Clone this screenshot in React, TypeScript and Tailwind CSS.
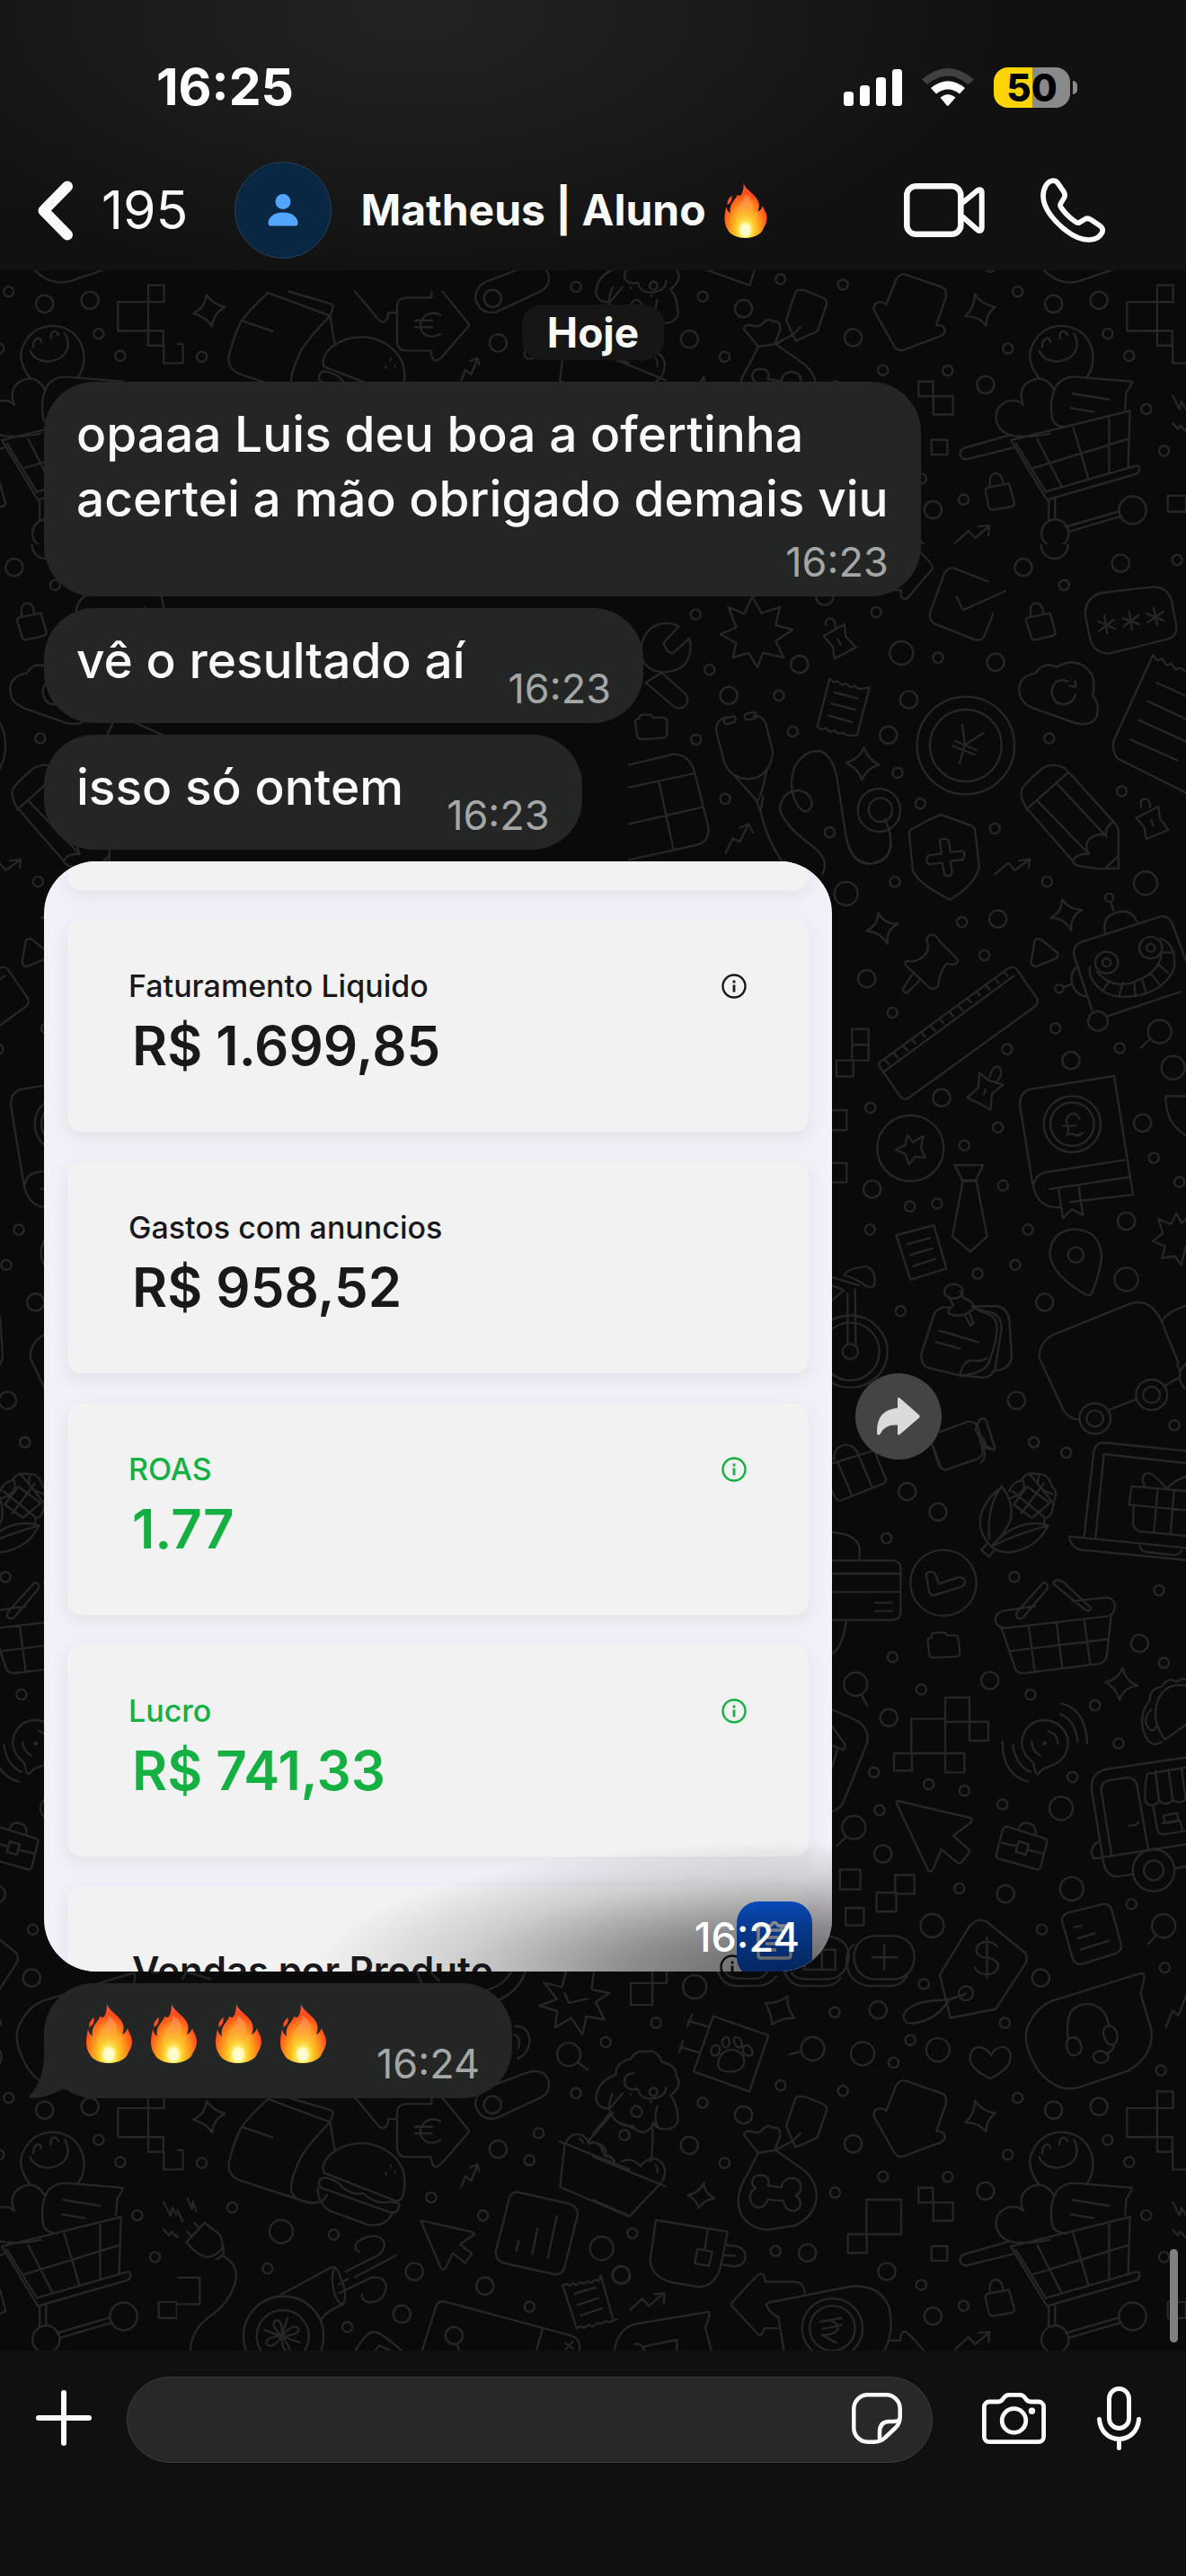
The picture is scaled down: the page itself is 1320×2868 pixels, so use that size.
import type { ReactNode } from "react";

type Point = [number, number];
type Oval = [number, number, number, number];

type Region = {
  x: number;
  y: number;
  sx: number;
  sy: number;
  small: Point[];
  medium: Point[];
  large: Point[];
  ovals: Oval[];
  path: string;
};

// Wallpaper doodles, one entry per part of the tile
const regions: Region[] = [
  {
    x: 0,
    y: 2330,
    sx: 2.24,
    sy: 2.914,
    small: [[503, 228], [579, 372], [832, 460], [667, 570], [1075, 340], [1204, 398], [1343, 131], [1320, 219], [1320, 694], [866, 760]],
    medium: [[1242, 183], [1033, 580], [1209, 627], [1002, 718], [1132, 788], [1548, 590]],
    large: [[701, 450], [1500, 505]],
    ovals: [[707, 790, 100, 130], [705, 790, 65, 85]],
    path:
      "M515 27q15 30 46 40-30 20-32 62-15-30-47-42 30-20 33-60z" +
      "M485 422l12 18M466 450l10 14M465 485l45-63 38 38q10 25 5 45-10 25-38 28-22-5-50-48zM555 495q10 30-15 45M556 530q45 30 28 95-15 60-60 100-45 40-50 110" +
      "M410 352l22 50 5-35 18 50M467 342l12 35 2-25 8 32M408 443l18 22 3-18 15 20" +
      "M432 600h66v86h-66zM398 685h36v45h-36zM408 186h48v62h-48z" +
      "M668 20q-50 60-70 100-20 60-28 110-2 40 30 55l170 72q35 5 45-25M668 20l155 75 8-30q-2-8-15-12L720 16M823 95q-60 80-75 120-25 70-22 100 5 35 45 40M823 95l12 95M605 112l75 33" +
      "M808 260q-10-30 20-65 40-38 90-30 60 15 85 80 12 45 0 95-5 12-18 10zM795 290q5-20 25-12 25 10 35 30 25 25 50 18 25 30 50 30 30-5 40 5 0 30-20 28L800 308q-6-8-5-18zM792 308q0 50 30 75l95 45q45 10 62-40M962 260v4M974 235v4M985 256v4" +
      "M1010 36h66V16M990 85h-22q0 25-12 30-10 0-20-20L885 16M990 85V60q2-22 22-24M990 85v95q2 28 22 28h62q2 30 12 32 8 0 20-18l60-90q5-8 0-15L1103 16M1098 92q-20-12-35 0-15 15-15 35t15 32q20 8 35-5M1035 110h42M1035 132h42" +
      "M1150 305l10-35 15 15 15-50M1172 242l18-10 5 22" +
      "M1290 322l128 38q25 10 22 38l-32 165q-5 30-30 25l-120-35q-25-10-22-38l32-165q5-30 22-28zM1388 400l-22 135M1340 440l-13 83M1293 482l-6 30" +
      "M1052 415l120 35q15 5 8 12l-33 30 30 30-18 30-30-32-18 48q-6 10-12 0L1050 418z" +
      "M1403 625l10-5 6 6 10-8 8 6 10-10 8 6 10-8 8 5 12-10 8 4 5-18 30 140M1403 625l35 140 10-8 8 6 12-10 10 5 12-12 10 4 10-10 8 5 20-10M1432 652l52-20M1440 688l52-22M1448 722l52-22" +
      "M700 655l125-88q15-8 25 35 18 60 5 85-40 18-55 50M835 565q-10 20-4 70 8 50 25 50M862 580l80-52q20-20 15-45-10-25-42-15-35 15-28 40l8 8M885 598l102-70M845 650l80-50q35-8 38 30-5 50-45 50-18-8-15-25M845 622l22-18" +
      "M702 790q-30-40-15-52 20 0 15 52 30-45 42-25 5 20-42 25-40 0-38 25 15 20 38-25 0 50 20 50 5-10-20-50l15-60M702 790l45 20M702 790l-42-20" +
      "M1052 838l35-145q5-18 20-16l315 110q28 10 22 50M1352 768l-15 70M1140 820l5 18M1410 812l18 16M1428 808l-18 24M885 838q30-65 48-62 15 0 70 62M935 838l10-18 30 18" +
      "M1395 158l173 90M1408 168l-12 138 172 95M1410 165q10-35 35-30 18 5 22 30 30-15 40 40 25 5 25 22M1445 150q8 3 8 12M1468 155l60-90",
  },
  {
    x: 0,
    y: 2060,
    sx: 2.24,
    sy: 3,
    small: [[1510, 641], [1436, 811]],
    medium: [[1228, 850]],
    large: [[1418, 682]],
    ovals: [],
    path:
      "M1480 410l-5 55 45 12-35 30 22 58-45-10-10 60-28-55-40 32 5-55-45-18 45-22-33-55 45 15 10-50M1408 478l10 32 45-14" +
      "M1285 588q35 0 35 52-5 45-30 55M1282 615q18 10 10 45M1440 708l25 25" +
      "M1185 850q0-40 30-58l100-50q40-15 52 25 8 40-20 60l-110 68q-40 10-52-45z" +
      "M1040 405q15 75 50 75M1310 405q-20 80-95 110M1075 405q5 15 20 30M1275 405q-20 50-70 65M455 430l10-25 60 25",
  },
  {
    x: 660,
    y: 2060,
    sx: 2.376,
    sy: 2.8,
    small: [
      [969, 119], [1424, 168], [1187, 247], [1512, 366], [875, 417], [639, 505], [1089, 538], [839, 592], [795, 662], [167, 538],
      [496, 733], [661, 750], [1123, 772], [1502, 686], [1361, 903], [1097, 949], [1418, 972], [348, 975], [767, 1017],
      [938, 1018], [640, 1067], [1463, 1138], [483, 1249], [104, 1194], [868, 1355], [980, 1420], [1510, 1268], [83, 888], [290, 787],
    ],
    medium: [
      [1091, 136], [1184, 398], [754, 498], [398, 825], [255, 920], [688, 915], [1218, 810], [1338, 799], [1038, 1062], [567, 1255],
      [777, 1313], [75, 1325], [899, 1452],
    ],
    large: [[1266, 120], [897, 235], [269, 426], [912, 622], [713, 634], [1509, 236], [581, 619]],
    ovals: [[633, 1490, 80, 93], [633, 1490, 60, 70], [1427, 1453, 36, 43], [1222, 1525, 36, 43], [986, 446, 19, 22]],
    path:
      "M1490 265l-22 27M550 627l-30 10M653 60h54v62h-54zM799 77h51v59h-51zM750 132h52v59h-52zM668 180h48v54h-48zM100 414h57v68h-57zM157 378v36h38v-36" +
      "M740 267h60q48 10 50 65-2 60-50 70h-60q-48-10-50-70 2-55 50-65zM690 295q-20 15-20 55 5 60 55 73h60q30 0 45-30M770 295v77M738 334h66M625 268q50 10 52 62-5 62-52 72h-60q-30 0-40-20M505 378q15 40 45 45h60q30 0 45-25M605 310h-46v62h82v-62h-36v62M330 378q15 45 50 45h55q30 0 50-30M350 380q10 20 40 20h40q20 0 30-20" +
      "M1020 218q-15 5-25 20l-78 150 28 135 120-28 80-145q5-15-2-30L1040 222q-10-5-20-4zM1042 272v127M1068 300q-8-15-28-15-26 3-26 28 2 20 28 22 30 5 30 28-4 22-32 24-24-2-30-22M985 447q-30 20-90 22-60 8-74 45 0 30 30 25 55-10 90-70" +
      "M1255 195l90-26q20-5 27 18l24 105q5 20-15 30l-85 32q-20 5-27-15l-28-115q-3-20 14-29zM1273 240l18-5M1282 275l44-16M1290 310l75-28" +
      "M1456 385q5 10-8 62l28 110q10 80-60 130l-130 52q-60 20-110-55-50-95-20-150 20-45 55-63l230-85q12-4 15-1zM1272 583q-20 0-20 25 5 32 20 32 20-5 20-25-5-30-20-32zM1256 585q-5-60 10-85 20-25 50-20 40 10 48 65M1367 547q-20 0-17 28 8 32 22 32 15-5 15-28-5-30-20-32zM1378 605q0 20-22 30M1340 625q-18 5-17 20 5 18 20 18 20-3 20-20-3-15-23-18z" +
      "M515 455q-5 35 17 68-30-2-58 20-2-30-18-68 30 5 59-20zM1010 780q15 30 54 40-25 20-24 58-20-30-56-30 24-20 26-68zM293 1037q0 30 28 48-28 5-42 30-5-25-28-40 28-5 42-38z" +
      "M318 517l146 60-50 175-148-62zM302 549l-50-17M262 512l-12 36M278 630l-48-17M238 593l-10 36M365 622c-18 0-32 18-34 40-2 30 22 28 38 28 22-2 34-20 30-38-2-18-16-30-34-30zM325 607c-8 0-14 12-13 22 2 16 18 14 22 0 3-12 0-22-9-22zM353 582c-10 2-14 16-10 26 6 12 18 6 18-8 0-10-2-18-8-18zM378 582c-8 2-6 14-2 24 6 14 20 10 18-4-2-10-8-20-16-20zM405 608c-10 4-12 16-5 26 8 12 22 8 22-4 0-10-8-24-17-22z" +
      "M60 700q0-40 40-50 15-30 40-22 30-10 42 32 40 10 38 42 20 30-15 62 20 30 20 80-10 30-40 25-20-2-25-20-5 25-30 30-20-5-25-20-40 5-58-40-10-20 5-60M60 700q-50 20-52 75 5 35 38 28l32-45M108 695q-25 0-25 28 5 30 35 20 5 30 35 32 40-5 40-35M150 750q10-20 20 0 0 18-12 16-10-4-8-16M170 798q-10 40 0 60M100 812q15-30 30 0 0 20-15 20-14-4-15-20M158 870q0 60-5 100M45 820L0 885M75 850l55 30M100 760v2M154 784v2" +
      "M0 955l190 92M0 1090l97 50 85-105M75 970q30-15 50 15 20-30 45-22 30 20 15 65M0 910q35 5 35 40 20 5 20 25M165 980q8 10 5 25" +
      "M1053 640q10-30 35-26 20 8 15 40-5 30-53 58-48-28-53-58 0-35 20-40 25 0 36 26z" +
      "M545 767q-10 2-12 15l-22 78 25 66 57-30 25-85q2-12-10-20l-50-24zM548 882L530 905 483 935M437 943l-38-55q2-15 20-12 20 10 30-5 15-20 28-5 20-5 18 25l-15 45zM437 943q-20 50-42 95-20 55-2 100 25 45 70 45l70-13q50-25 58-85 2-50-30-85l-78-65M462 1045c8-20-4-34-22-32-20 2-26 28-10 40-14 8-20 30-10 48 16 24 36 10 42-12l42 4c2 20 14 36 32 30 18-10 16-36 0-46 16-10 20-36 4-50-20-12-40 0-42 24z" +
      "M825 718q-20-3-28 30l-22 65q-5-10-20-8-15 5-12 25l55 115q10 15 25 8l95-42q15-8 12-20 0-15-22-15l25-85q5-30-15-35z" +
      "M1492 752v188h41v55h35M1492 752h42v52h-122v90h120v46M723 1089h92v108h-92zM674 1197h50v58h-50zM861 1052h38v46h-38zM900 1098h52v57h-52zM895 1234h42v46h-42z" +
      "M166 1153l190 36-15 90q-12 80-60 82l-65-12q-60-15-65-70zM303 1187l-7 57M276 1243l39 8-8 45-38-8zM352 1230l30 5q25 10 20 40-5 22-30 22l-28-5M347 1262l28 2" +
      "M98 1433l32-35 18 22 38-38M163 1384l26-3-2 32M958 1555l35-37 18 22 38-38M1020 1504l28-3-2 32" +
      "M458 1415q5 25 32 40l15 105M458 1415q10-8 30-10l190-45q80-10 105 65 15 80-15 140M560 1385q0-40-30-40h-75q0-25-12-25-8 0-75 90-5 8 5 18l65 82q10 5 15-20h35M602 1470l55-12M607 1492l50-12M628 1466q25 10 18 30-10 15-40 15l38 25M788 1528h25q0-28 12-28 8 2 50 60" +
      "M55 1568q10-80 60-92l190-37q8 0-8 50l18 80M110 1540q20-8 30 28l-10-20 92-22v42" +
      "M1045 1382l55-12 14 60q2 10-8 12l-48 10q-10 0-12-12l-8-45q-2-10 7-13zM1050 1380q-4-38 14-42 20 2 20 35" +
      "M1180 1042q-40-60-15-110 25-55 80-53 60 8 75 75 8 45-12 82M1180 957q10 30 45 33 50-5 55-50 0-20-8-38M1188 945q0-25 12-28 8 0 10 12M1234 918q0-25 12-22 8 4 8 12M1138 1125q-20-60 30-80 30-10 50 30M1138 1125q-15-20-45-10-35 20-25 65 10 35 45 42 50 5 95-8M1215 1170q-10-60 10-105 15-25 45-28l155 15q3 2-15 35l-3 50M1215 1170q5 20 35 25M1268 1090l96 18M1264 1135l60 12" +
      "M1105 1235l315-92-5 180M1105 1235l95 185M1118 1245l80 152M1200 1395l235-80q12-2 10 12-2 12-10 14l-235 80M1175 1232l65 150M1270 1195l40 160M1365 1165v170M1165 1322l248-90M1100 1220l-120 40q-12 8-8 22 5 15 18 12l120-35M1205 1420v62M1222 1415v65M1250 1505l140-48M1258 1520l140-48" +
      "M1533 1097l18 42 5-25 12 24M1533 1183l14 18 6-12 15 18M1520 1408h48v50h-48zM1515 550l18-50 15 15 20-60",
  },
  {
    x: 860,
    y: 1600,
    sx: 3,
    sy: 3,
    small: [
      [872, 18], [980, 52], [380, 338], [807, 467], [1290, 512], [400, 735], [496, 843], [861, 860], [1076, 896], [1306, 754],
      [1155, 1023], [338, 1120], [1001, 1135], [521, 1160], [640, 1181], [767, 1227], [357, 1246],
    ],
    medium: [[449, 182], [552, 250], [725, 813], [1225, 689], [388, 937], [368, 1392]],
    large: [[963, 1240], [277, 825], [271, 1304]],
    ovals: [[570, 487, 110, 110], [1272, 1447, 70, 70], [1272, 1447, 33, 33], [908, 1023, 4, 4]],
    path:
      "M296 860l20 38M245 1335l-30 30M530 20l25 75q10 18 30 12l100-35q20-10 15-30L690 0M700 0l15 30 25 14q5-8-12-44" +
      "M198 88l145-45M343 55l35 85q2 10-8 15l-145 58q-15 0-27-35M215 80l50 115M280 45l52 122M205 75q-2-45 40-50 25 2 32 20" +
      "M765 165q40 50 30 110-20 50-65 90-60-60-25-130 20-40 60-70zM765 165q-50 60-42 175M730 365q90-100 190-70-40 80-130 90-40 0-60-20zM730 365q80-40 190-70M715 357l-18 20 25 22 20-25M790 180q10-30 40-35 15-30 50-22 40-5 52 42 25 20 5 52 0 50-30 55v25M835 145q20 40-45 60M860 125l80 100M850 165l-45 60 60 45 60-50-75-55M800 180l110 90M905 155l-75 100M890 130q-20 40 45 60" +
      "M513 465q-5-10 12-15 15-2 20 12l10 28 65-22q20-2 22 15 0 12-12 17l-90 28q-10 2-17-10z" +
      "M198 412h205q24 4 24 24v150q0 22-24 25H198M198 456h229M198 517h229M342 553h55M342 581h55M198 318q80 5 92 50v42M245 615q-12 90-47 108" +
      "M530 670q-15 0-12 15l5 40q3 12 15 12l75-4q12-2 12-14l-5-45q-2-12-14-12h-25q0-10-12-10l-30 2q-10 2-9 14z" +
      "M770 580l105-15M1000 548l115-12q25 3 28 28-2 30-25 34l-340 40q-30 0-35-28 2-25 28-30M1130 598l-15 135q-5 20-25 24l-255 32q-18 0-25-15L765 640M790 715l328-40M855 630l20 155M948 620l18 145M1040 610l20 145M905 485l-90 100q-5 15 5 20 10 3 18-5l78-92q8-18-11-23M955 478q-15-2-18 12l108 88q15 5 17-8l-90-85z" +
      "M1168 770q10 45 50 60-45 5-60 48-10-40-48-60 40-5 58-48z" +
      "M576 870h81v81h-81zM463 941h113v115h-113zM657 951h63v63h-63zM405 1056h60v58h-60zM576 1056h64v64h-64zM576 941v115" +
      "M870 1088q-50-40-35-90 20-50 70-53 60 2 80 60 8 70-60 95l-22 8-18 18q-8 0-15-38zM865 1018q0 30 28 45M920 982q32 10 32 42M960 925q50 20 58 92M965 890q80 20 85 133M802 1028q10 70 58 90M767 1018q0 110 85 133" +
      "M418 1215q-5 0-4 10l105 222q8 8 16-2l28-68 55 45q8 5 14-4l25-32q2-6-4-10l-50-45 60-45q6-8-2-14z" +
      "M775 1303q5-5 15 0l120 38q8 3 6 12l-22 85q-3 8-15 5l-125-35q-10-3-8-12l22-85zM820 1310q10-28 35-20 28 8 22 38M765 1355l45 10M850 1378l50 12M822 1350l33 10-10 35-33-10z" +
      "M1040 330l32-280q5-30 30-32l278 28M1078 335l28-278 274 30M990 332l390 38M990 332q5 35 35 44l355 35M1225 362q5 20 25 22l90 10q20-2 25-15M1380 180l-182-16-8 62 190 18M1285 178l-12 140M1340 182l-12 140M1205 232l-2 55q2 20 22 28l155 15M1315 172q-50-60-70-50-20 15 0 45M1315 172q30-30 65-40" +
      "M1380 830q-80-15-100 70-10 60 30 110l70-50M1300 1018q-40 25-60-30-20-60 20-110-5-35 40-45 20-35 50-15 15-15 30-8M1265 910q-25 20-18 50 20 35 35 5" +
      "M1380 1070l-260 38q-60 10-55 70l40 245q10 45 45 45l55-8M1132 1400l-35-220q0-30 25-33l60-10q30 0 35 30l38 215M1070 1408l310-48M1250 1125q-10 50-5 95 20 20 42 0l5-5q20 20 45-2 20 15 42-2M1250 1125l130-22M1278 1115l12 100M1322 1110l14 105M1365 1105l13 100M1270 1230l15 85q8 12 20 12l75-12M1190 1298l20-2 12-10M1305 1265l45-10 5 25-45 8zM1300 1290l60-8 8 30M1345 1440l35-6M1090 1350q-35 20-22 50 5 8 30 6" +
      "M198 910l80 35q45 25 38 75l-80 200q-15 25-38 30M198 965l42 60q5 10-5 20l-37-15M215 1045l-17 60",
  },
  {
    x: 900,
    y: 940,
    sx: 3,
    sy: 2.24,
    small: [
      [288, 94], [796, 93], [512, 194], [587, 277], [280, 420], [824, 459], [663, 511], [1039, 508], [206, 657], [632, 706],
      [520, 751], [1153, 782], [649, 851], [338, 903], [429, 896], [1238, 842], [205, 961], [732, 961], [690, 1049], [564, 1071],
      [307, 1164], [1221, 1449], [752, 1491],
    ],
    medium: [[632, 186], [194, 335], [876, 539], [444, 632], [1115, 695], [212, 860], [1061, 940], [788, 1142], [694, 1387]],
    large: [[125, 123], [1125, 97], [1217, 557], [1061, 1085], [1172, 467]],
    ovals: [
      [995, 295, 38, 27], [995, 295, 14, 10], [1142, 258, 38, 27], [1142, 258, 14, 10], [966, 441, 33, 24], [1004, 133, 14, 10],
      [837, 360, 14, 10], [340, 758, 111, 82], [880, 698, 95, 70], [880, 698, 73, 54], [892, 1024, 26, 19], [484, 1115, 31, 18],
      [956, 1432, 52, 38], [956, 1432, 28, 20], [1145, 1373, 52, 38], [1145, 1373, 28, 20], [139, 1265, 124, 90], [139, 1265, 97, 72],
      [139, 1265, 26, 19],
    ],
    path:
      "M1140 485l-30 22M232 170q20 30 66 28-40 15-35 50-25-30-70-32 40-15 39-46zM846 137q20 25 66 27-40 15-35 52-25-35-70-32 40-15 39-47z" +
      "M400 228q25-8 35 12l60 45q8 12-10 15l-25-2q-20 15-28 55-12 12-28 5l-78-55q-8-8 2-12 35 5 60-15 15-15 10-28-8-12 2-20zM345 325l-30 35q0 12 15 10l40-30" +
      "M755 240q10-8 25 0l50 30q8 8-5 15l-60 18q-20 5-22-10z" +
      "M905 245l270-65q30-3 40 20l45 90M905 245q-25 10-18 35l60 135M990 222q-10-40 30-50 55-15 75 20M1018 165l-10-22M1000 428l240-60M880 348l-28 8M900 305q-25 10-22 35 8 35 50 40M940 305q-10 30 40 60 50 25 130 10 80-15 110-65 10-60-45-75M1000 345l-18 20M1050 345l-12 30M1087 345l5 35M1115 340l12 32M1140 320l30 28M1165 298l35 22M1175 270h45M962 318q60 50 140 20 70-20 78-70" +
      "M235 545l430-235q15-8 28 0l70 75q5 10-5 18L335 632q-15 8-28-2l-70-75q-4-6-2-10zM250 568l435-240M255 538l12 10M285 521l14 12M316 503l14 12M346 487l12 10M377 470l12 10M408 453l14 12M438 436l12 10M470 418l12 10M500 402l14 12M530 384l12 10M560 367l12 10M590 350l14 12M622 335l12 10M652 318l12 10" +
      "M145 461h55v78h-55zM145 500h55M93 539h56v40h-56zM70 663h57v50h-57zM70 795h57v48h-57z" +
      "M570 570l30 18 50 12-38 22-5 40-35-15-43-15 38-25zM605 580q10-30 30-25 20 15-10 40M590 612l-6 12" +
      "M330 725l18 18 35-15-8 30 14 24-32-4-22 20-12-25-33-12 32-10z" +
      "M488 800h95l-25 38h-45zM515 840l-35 138 60 38 56-38-36-138z" +
      "M705 650q0-35 40-40l275-32 63 296-210 18M705 650l45 205q20 55 90 50M750 855q5-35 50-38l255-30M805 860l265-30M835 862l14 70 30-22 37 15-14-70M905 685q-15-20-35-10-15 10-5 30 5 15-2 20l18-3q15 8 34-2M850 702h42" +
      "M892 960q-80 2-87 60 5 55 125 105 12 2 18-10 30-60 30-90-5-60-86-65z" +
      "M293 975l125-25 42 108-120 28zM330 997l75-15M340 1024l72-16M350 1052l74-18" +
      "M545 1152h85q35 5 40 35l8 85q0 30-35 38l-30 5M470 1155h-20q-25 2-35 25l-38 90q-5 25 20 35l110 20 80 5q25-3 35-20l22-100q2-40-50-45l-40-8M560 1160l50 15q40 20-5 110-10 35-100 40 10-40 45-38 20 5 45-5M437 1213l130 29M425 1241l80 17M520 1172l20 28 10-6-15-28M468 1128l15 22q-20 10-15 20 40 15 80-10 10-20-30-28l-12-18" +
      "M1260 935l-15 10-17-25-18 27-42-12 15 35-35 20 42 12-10 30 42-5 22 22 15-45M1260 628h-68q0 70 68 98" +
      "M770 1280q0-40 50-58l260-78q60-10 95 40l60 110M770 1280l80 130q20 25 55 25M1005 1410l90-26M1180 1190q10-20 80-40M1190 1350l50-22q0-20-10-30M1260 1295q-30 20-18 45 8 15 18 18" +
      "M130 1120v125M155 1110l2 135M78 1080l90 20M78 1100l40 12-40 25M120 1075q0-15 70-22 35 5 30 45-10 10-25 5-40-22-75-28z" +
      "M440 1465l90-25q25-2 35 12l22 60q5 20-12 30M570 1435q15-5 22 0l30 70q-5 8-30 0l-35-45zM410 1490l30 60M133 0q15 45 75 48 60-5 68-48",
  },
  {
    x: 700,
    y: 580,
    sx: 2.529,
    sy: 3,
    small: [
      [188, 312], [696, 305], [227, 497], [422, 583], [870, 457], [1225, 214], [1543, 130], [461, 703], [189, 730], [1183, 726],
      [756, 841], [271, 928], [820, 944], [565, 1040], [1030, 1027], [1387, 903],
    ],
    medium: [[1110, 155], [1384, 141], [551, 252], [480, 479], [281, 583], [1032, 472], [788, 597], [730, 715]],
    large: [[767, 441]],
    ovals: [[1198, 80, 38, 46], [948, 750, 137, 163], [948, 750, 101, 120], [704, 966, 60, 72], [708, 965, 33, 40]],
    path:
      "M878 982q-15 2-85 50-5 5-4 15l10 120q15 45 105 98 70-50 82-110l-12-125q-2-8-12-13l-70-30q-8-3-14-7zM875 1065q15-8 25 3l5 38 35-3q10 8 0 28l-35 5 5 38q-5 18-22 8l-6-40-38 5q-14-12 0-30l36-6z" +
      "M1030 1180l38-38 18 25 40-35M1098 1135l30-5-2 28" +
      "M1105 900q5-20 60-75 30-20 60 0l25 30 118 155q10 10 10 30v120l-55 2-60-10q-12-8-15-18l-125-170q-22-30-18-64zM1118 965l118-125M1150 935l145 178q-35-5-45 22M1205 878l138 175q-5-30 20-48M1295 1113q-20-40 15-62 30-10 35 5M1378 1118l-35 40" +
      "M1428 992l62-38 5 40 23 38-62 30-5-38-22-30zM1442 955q-5-25 10-27 15 0 15 28M1470 998l5 20" +
      "M1475 448l-110 285q-8 30 10 60l193 115M1475 448l12 18 14-6 12 22 14-6 12 20 14-5 15 12M1485 540l83 45M1460 602l108 60M1435 665l133 72M1412 730l132 70" +
      "M1100 580q-10-60 45-72 20-40 60-20 60-40 98 25 10 30 2 70 20 25 12 70-15 35-60 22l-120-50q-32-15-37-45zM1235 535q-40-15-45 35 5 45 35 42 25-3 32-32M1240 550l18 5-2-20" +
      "M938 680l8 68-16 62M946 748l52-40M918 735l60 30M912 752l60 28" +
      "M1010 202l-90-42q-20-10-32 15l-40 130q-5 25 12 38l110 52q20 8 30-10l25-75M922 252l18 46 120-64" +
      "M1125 322l60-14 15 62q2 10-8 14l-50 13q-8 0-10-10l-14-52q-2-10 7-13zM1132 320q-8-42 14-46 20 2 20 38" +
      "M1330 240l145-20q40 0 52 45l14 85q2 38-25 45l-165 48q-42-3-52-45l-14-80q-5-60 45-78zM1338 315l8 60M1320 335l48 25M1365 330l-42 38M1408 302l8 60M1390 325l46 20M1434 315l-42 38M1477 290l10 58M1458 310l46 22M1504 303l-44 36" +
      "M820 105q40 45 34 55l-70 98q-10 8-18-5v-22h-20" +
      "M347 252l-22 58-45-22 22 68-45 22 45 30-10 48 45-15 25 48 15-48 58 15-22-55 48-38-48-15 12-60-52 20z" +
      "M548 385l58-40 5 42 28 35-60 38-5-40zM555 348q-5-20 12-22 15 2 14 32M588 395l8 18" +
      "M140 352q-40-25-80 8-30 35-25 90 10 50 60 55l-48 35 80 80q22 15 35-10 8-15-5-35L90 505q50 0 70-30 20-40 10-82l-48 50q-15-5-25-35z" +
      "M30 660q-15 0-12 15l5 42q2 12 14 12l58-4q12-3 12-12v-45q-2-12-14-12l-25 2q-2-12-12-12l-20 2q-8 2-6 12z" +
      "M275 655q-35 10-28 55l20 90q15 60 70 62 60-5 68-90l-20-95q-10-30-35-25M270 660l25-8q10 8 2 20l-22 6q-12-4-5-18zM328 645l25-7q10 8 2 22l-22 4q-12-5-5-19zM300 855l60 80q10 0 28-105M370 970q20 100 60 165M370 970l-12-38M370 970l8-50M545 1180q20-50-25-90-90-80-95-130 5-55 50-60 40 5 40 50-15 40-40 0-30-60-8-130 30-60 75-50 35 20 45 100l25 190q15 90 70 85 70-10 50-115l-12-35" +
      "M565 527l12 12 10-4 12 12 12-4 12 12 12-4 12 10 12-2 18-2-35 160M565 527l-35 160 12 10 12-5 12 12 12-4 12 10 14-2 10 8 26 1M578 573l66 20M570 610l66 20M562 650l66 22" +
      "M662 757q8 35 42 58-35 10-48 50-8-35-45-58 35-8 51-50z" +
      "M0 815l120-35q50-5 65 60l38 180q5 45-25 60L0 1132M0 890l185-47M0 1012l210-57M85 875l40 220M272 1110l20-50 20 12 25-60M312 1025l25-12 12 28",
  },
];

function Wallpaper() {
  return (
    <svg aria-hidden="true" className="absolute inset-0 -z-10 h-full w-full" fill="none">
      <defs>
        <clipPath id="tile-edge">
          <rect x="197" y="606" width="1123" height="2011" />
        </clipPath>
        <g id="tile" clipPath="url(#tile-edge)" stroke="#262626" strokeWidth="2.4" strokeLinejoin="round" strokeLinecap="round">
          {regions.map((r, i) => (
            <g key={i}>
              {r.small.map(([x, y]) => (
                <circle key={`${x}-${y}`} cx={r.x + x / r.sx} cy={r.y + y / r.sy} r="5.6" />
              ))}
              {r.medium.map(([x, y]) => (
                <circle key={`${x}-${y}`} cx={r.x + x / r.sx} cy={r.y + y / r.sy} r="9.6" />
              ))}
              {r.large.map(([x, y]) => (
                <circle key={`${x}-${y}`} cx={r.x + x / r.sx} cy={r.y + y / r.sy} r="13" />
              ))}
              {r.ovals.map(([x, y, w, h], n) => (
                <ellipse key={n} cx={r.x + x / r.sx} cy={r.y + y / r.sy} rx={w / r.sx} ry={h / r.sy} />
              ))}
              <path
                d={r.path}
                vectorEffect="non-scaling-stroke"
                transform={`translate(${r.x} ${r.y}) scale(${1 / r.sx} ${1 / r.sy})`}
              />
            </g>
          ))}
        </g>
      </defs>
      <use href="#tile" />
      <use href="#tile" x="-1123" />
      <use href="#tile" y="-2011" />
      <use href="#tile" x="-1123" y="-2011" />
      <use href="#tile" x="1123" />
      <use href="#tile" x="1123" y="-2011" />
    </svg>
  );
}

function Fire({ className }: { className: string }) {
  return (
    <svg viewBox="0 0 51 66" role="img" aria-label="fogo" className={className}>
      <defs>
        <radialGradient id="flame" gradientUnits="userSpaceOnUse" cx="25" cy="57" r="56" gradientTransform="translate(25 57) scale(.62 1) translate(-25 -57)">
          <stop offset="0" stopColor="#ffffc4" />
          <stop offset=".16" stopColor="#fff36b" />
          <stop offset=".36" stopColor="#ffc01f" />
          <stop offset=".58" stopColor="#ff8a1c" />
          <stop offset=".8" stopColor="#fd4a1c" />
          <stop offset="1" stopColor="#fb5b3c" />
        </radialGradient>
        <linearGradient id="core" x1="0" y1="0" x2="0" y2="1">
          <stop offset="0" stopColor="#ff7a4a" />
          <stop offset=".4" stopColor="#ff9d3c" />
          <stop offset="1" stopColor="#ffd23a" stopOpacity="0" />
        </linearGradient>
      </defs>
      <path
        fill="url(#flame)"
        d="M23 0c1 5 7 9 12 14 7 7 8 12 5 20 3-1 5-4 6-7 1 5 5 8 5 15 0 5-2 9-4 12l-1 2c-1 4-9 10-21 10S5 60 4 56C1 52 0 48 0 42c0-5 1-9 2-14 1 4 2 6 5 8-1-5 0-9 2-12 3-5 5-6 6-10 2 1 3 1 4 1 3-3 4-8 4-15zM8.500 15c1 5-1 9-5 11-1-5 2-8 5-11z"
      />
      <path fill="url(#core)" d="M25 13c4 4 9 8 9 15 0 4-2 6-1 9 3 0 4-1 6-3 1 9-4 17-14 17S11 45 12 37c3 1 4 0 4-3 0-8 8-10 9-21z" />
      <ellipse cx="25" cy="56" rx="7" ry="8" fill="#fffde0" opacity=".7" />
    </svg>
  );
}

function Bubble({ time, stacked, children }: { time: string; stacked?: boolean; children: ReactNode }) {
  return (
    <div
      className={`flex w-fit max-w-full rounded-[56px] bg-[#242625] px-9 pt-[22px] pb-[14px] text-[55px] leading-[72px] font-medium text-[#fafafa] ${
        stacked ? "flex-col gap-[11px]" : "items-end gap-12"
      }`}
    >
      <div className={stacked ? "" : "mb-5"}>{children}</div>
      <time className="self-end text-[45px] leading-[48px] font-normal text-[#a5a7a6]">{time}</time>
    </div>
  );
}

function InfoIcon() {
  return (
    <svg viewBox="0 0 28 28" className="h-7 w-7" fill="none" stroke="currentColor" strokeWidth="2.400">
      <circle cx="14" cy="14" r="12.500" />
      <path d="M14 12.500v8M14 7.500v3" strokeWidth="2.800" />
    </svg>
  );
}

const metrics = [
  { label: "Faturamento Liquido", value: "R$ 1.699,85", color: "text-[#19191c]", info: true },
  { label: "Gastos com anuncios", value: "R$ 958,52", color: "text-[#19191c]", info: false },
  { label: "ROAS", value: "1.77", color: "text-[#14b042]", info: true },
  { label: "Lucro", value: "R$ 741,33", color: "text-[#14b042]", info: true },
];

const cardStyle = "rounded-2xl bg-[#f2f2f2] shadow-[0_6px_16px_4px_#e7e5ec]";

function SharedPicture() {
  return (
    <figure className="relative h-[1236px] w-[877px] max-w-full overflow-hidden rounded-[58px] bg-[#f3f0f9]">
      <div className="flex flex-col gap-[33px] px-[26px]">
        <div className={`h-8 ${cardStyle}`} />
        {metrics.map((m) => (
          <div key={m.label} className={`h-[236px] pr-[69px] pl-[68px] pt-[54px] ${cardStyle} ${m.color}`}>
            <div className="flex h-10 items-center justify-between">
              <span className="text-[34px] leading-10 font-medium">{m.label}</span>
              {m.info && <InfoIcon />}
            </div>
            <p className="mt-[10px] pl-1 text-[60px] leading-[72px] font-semibold">{m.value}</p>
          </div>
        ))}
        <div className={`flex h-[236px] items-start justify-between pt-[68px] pr-[71px] pl-[72px] text-[#19191c] ${cardStyle}`}>
          <span className="text-[42px] leading-[52px] font-semibold">Vendas por Produto</span>
          <span className="mt-2">
            <InfoIcon />
          </span>
        </div>
      </div>
      <div className="absolute right-[22px] -bottom-2 flex h-[86px] w-[84px] items-center justify-center rounded-[24px] bg-gradient-to-b from-[#0a66ff] to-[#0a5ae0]">
        <svg viewBox="0 0 40 44" className="h-11 w-10" fill="none" stroke="#dfe6ee" strokeWidth="3.500" strokeLinejoin="round">
          <path d="M12 6H5q-3 0-3 3v30q0 3 3 3h30q3 0 3-3V9q0-3-3-3h-7M12 11V6h4q4-7 8 0h4v5z" />
          <path d="M10 19h20M10 26h20M10 33h12" />
        </svg>
      </div>
      <div className="absolute right-0 bottom-0 h-44 w-full bg-[radial-gradient(540px_145px_at_96%_100%,rgba(0,0,0,0.6),rgba(0,0,0,0.42)_35%,rgba(0,0,0,0.15)_70%,transparent)]" />
      <time className="absolute right-9 bottom-[14px] text-[45px] leading-[48px] font-medium text-white">16:24</time>
    </figure>
  );
}

function StatusBar() {
  return (
    <div className="flex h-[66px] items-center justify-between pr-[121px] pl-[174px]">
      <span className="text-[57px] leading-[62px] font-bold text-white">16:25</span>
      <div className="flex items-center gap-[22px]">
        <svg viewBox="0 0 65 41" className="h-[41px] w-[65px]" fill="#fff">
          <rect y="25" width="11" height="16" rx="3.500" />
          <rect x="18" y="18" width="11" height="23" rx="3.500" />
          <rect x="36" y="9" width="11" height="32" rx="3.500" />
          <rect x="54" width="11" height="41" rx="3.500" />
        </svg>
        <svg viewBox="0 0 58 42" className="h-[42px] w-[58px]">
          <path fill="#414141" d="M0 12.500Q29-12.500 58 12.500L51.500 18Q29-1 6 18z" />
          <path fill="#fff" d="M10 22q19-15.500 38 0l-6 6.500q-13-10-26 0zM20.500 32.500q8.500-7 17 0L30 41.200q-1.200 1.200-2.400 0z" />
        </svg>
        <div className="flex items-center gap-[3px]">
          <div className="flex h-[45px] w-[85px] items-center justify-center rounded-2xl bg-[linear-gradient(90deg,#fed402_50%,#8a8a8a_50%)]">
            <span className="text-[42px] leading-[45px] font-extrabold text-black">50</span>
          </div>
          <span className="h-[15px] w-[5px] rounded-r-full bg-[#8a8a8a]" />
        </div>
      </div>
    </div>
  );
}

function Header() {
  return (
    <header className="bg-[#111111] bg-[radial-gradient(650px_300px_at_35%_5%,#232323,#1a1a1a_55%,#111111)] pt-16 pb-[13px] text-[#fafafa]">
      <StatusBar />
      <div className="mt-[50px] flex h-[108px] items-center pr-[90px] pl-10">
        <button className="flex items-center gap-8" aria-label="Voltar">
          <svg viewBox="0 0 41 67" className="h-[67px] w-[41px]" fill="none" stroke="currentColor" strokeWidth="12" strokeLinecap="round" strokeLinejoin="round">
            <path d="M35 6.500L8.500 33.500 35 60.500" />
          </svg>
          <span className="text-[59px] leading-[62px]">195</span>
        </button>
        <div className="ml-[52px] flex h-[108px] w-[108px] shrink-0 items-center justify-center rounded-full border border-[#24405a] bg-[#092642]">
          <svg viewBox="0 0 34 36" className="h-9 w-[34px]" fill="#53a6fd">
            <circle cx="17" cy="8.500" r="8.500" />
            <path d="M0.500 32.500C0.500 25 8 20.500 17 20.500s16.500 4.500 16.500 12q0 3-3 3h-27q-3 0-3-3z" />
          </svg>
        </div>
        <h1 className="ml-8 flex items-center gap-5 text-[48px] leading-[56px] font-bold whitespace-nowrap">
          Matheus | Aluno
          <Fire className="h-[61px] w-12" />
        </h1>
        <button className="ml-auto" aria-label="Chamada de vídeo">
          <svg viewBox="0 0 90 60" className="h-[60px] w-[90px]" fill="none" stroke="currentColor" strokeWidth="6.600" strokeLinejoin="round">
            <rect x="3.300" y="3.300" width="60" height="53.400" rx="10" />
            <path d="M65 22L82 8q4.700-2.500 4.700 2.500v39q0 5-4.700 2.500L65 37" strokeWidth="6" />
          </svg>
        </button>
        <button className="ml-[62px]" aria-label="Ligar">
          <svg viewBox="0 0 214 214" className="h-[72px] w-[72px]" fill="none" stroke="currentColor" strokeWidth="17" strokeLinejoin="round">
            <path d="M43 9c8 0 11 3 15 9l19 28c5 8 5 12 2 19L67 85c-3 5-2 9 2 14 12 18 28 33 46 46 5 4 9 6 14 3l18-11c7-4 13-3 19 1l30 20c9 6 12 14 8 23-7 14-20 23-40 24-22 1-50-8-76-28C45 145 9 100 9 60 9 35 22 9 43 9z" />
          </svg>
        </button>
      </div>
    </header>
  );
}

function Composer() {
  return (
    <footer className="flex items-start bg-[#101010] pt-[29px] pr-[50px] pb-[126px] pl-10 text-[#fafafa]">
      <button className="flex h-24 shrink-0 items-center pb-1" aria-label="Anexar">
        <svg viewBox="0 0 62 62" className="h-[62px] w-[62px]" stroke="currentColor" strokeWidth="6" strokeLinecap="round">
          <path d="M3 31h56M31 3v56" />
        </svg>
      </button>
      <div className="ml-[39px] flex h-24 min-w-0 flex-1 items-center rounded-full border border-[#3c3c3c] bg-[#282828] pr-[33px] pl-10">
        <input type="text" aria-label="Mensagem" className="h-full min-w-0 flex-1 bg-transparent text-[50px] outline-none" />
        <button aria-label="Figurinhas" className="shrink-0 pb-1">
          <svg viewBox="0 0 56 57" className="h-[57px] w-14" fill="none" stroke="currentColor" strokeWidth="4.500" strokeLinejoin="round">
            <path d="M18 2.300h20A15.500 15.500 0 0 1 53.700 18v9c0 5-2 9-5 12L37 50c-3 3-7 4.700-12 4.700h-7A15.500 15.500 0 0 1 2.300 39V18A15.500 15.500 0 0 1 18 2.300z" />
            <path d="M31 53.500V44c0-8 4-12 11-12h4c3 0 6-1 7.500-2.500" />
          </svg>
        </button>
      </div>
      <button className="ml-[55px] flex h-24 shrink-0 items-center pb-1" aria-label="Câmera">
        <svg viewBox="0 0 71 57" className="h-[57px] w-[71px]" fill="none" stroke="currentColor" strokeWidth="4.800" strokeLinejoin="round">
          <path d="M8 10h10c3 0 4-1 5.500-3.500C25.500 3.500 27 2.400 30 2.400h12c3 0 4.500 1.100 6.500 4.100C50 9 51 10 54 10h9a5.600 5.600 0 0 1 5.600 5.600V49a5.600 5.600 0 0 1-5.600 5.600H8A5.600 5.600 0 0 1 2.400 49V15.600A5.600 5.600 0 0 1 8 10z" />
          <circle cx="35.500" cy="31" r="13.300" />
          <circle cx="55.500" cy="20.300" r="3.700" fill="currentColor" stroke="none" />
        </svg>
      </button>
      <button className="ml-[57px] flex h-24 shrink-0 items-center pb-1" aria-label="Gravar áudio">
        <svg viewBox="0 0 49 71" className="h-[71px] w-[49px]" fill="none" stroke="currentColor" strokeWidth="5" strokeLinecap="round">
          <rect x="13.500" y="2.500" width="22" height="44" rx="11" />
          <path d="M2.500 36.500c1 13 10 22 22 22s21-9 22-22M24.500 59v9.500" />
        </svg>
      </button>
    </footer>
  );
}

export default function App() {
  return (
    <div className="relative isolate flex min-h-screen flex-col bg-[#0a0a0a] font-[Inter,sans-serif]">
      <Wallpaper />
      <Header />
      <main className="relative flex flex-1 flex-col pt-[38px] pr-6 pb-8 pl-[49px]">
        <span className="mr-[25px] self-center rounded-[22px] bg-[#161616] px-7 text-[46px] leading-[62px] font-bold text-[#fafafa]">
          Hoje
        </span>
        <div className="mt-6 flex flex-col gap-[13px]">
          <Bubble time="16:23" stacked>
            opaaa Luis deu boa a ofertinha
            <br />
            acertei a mão obrigado demais viu
          </Bubble>
          <Bubble time="16:23">vê o resultado aí</Bubble>
          <Bubble time="16:23">isso só ontem</Bubble>
          <div className="flex items-center gap-[26px]">
            <SharedPicture />
            <button className="flex h-24 w-24 shrink-0 items-center justify-center rounded-full bg-[#434445]" aria-label="Encaminhar">
              <svg viewBox="0 0 48 42" className="h-[42px] w-12" fill="#d9dada">
                <path d="M23 1.500q0-2.500 2.500-1L47 19.500q1.500 1.500 0 3L25.500 41q-2.500 1.500-2.500-1V30.500Q9 29.500 4 40q-1.500 2.500-3.700 1Q-2 14 23 11.500z" />
              </svg>
            </button>
          </div>
          <div className="relative w-fit">
            <svg viewBox="0 0 60 50" className="absolute bottom-0 -left-[17px] h-[50px] w-[60px]" fill="#242625">
              <path d="M17 0q0 30-16 47-2 3 2 3 18 0 36-11l12-10V0z" />
            </svg>
            <Bubble time="16:24">
              <div className="relative flex h-[72px] items-center gap-[21px] pr-2 pb-1 pl-[11px]">
                <Fire className="h-[66px] w-[51px]" />
                <Fire className="h-[66px] w-[51px]" />
                <Fire className="h-[66px] w-[51px]" />
                <Fire className="h-[66px] w-[51px]" />
              </div>
            </Bubble>
          </div>
        </div>
        <div className="absolute right-[9px] bottom-[9px] h-[104px] w-[9px] rounded-full bg-[#808080]" />
      </main>
      <Composer />
    </div>
  );
}
